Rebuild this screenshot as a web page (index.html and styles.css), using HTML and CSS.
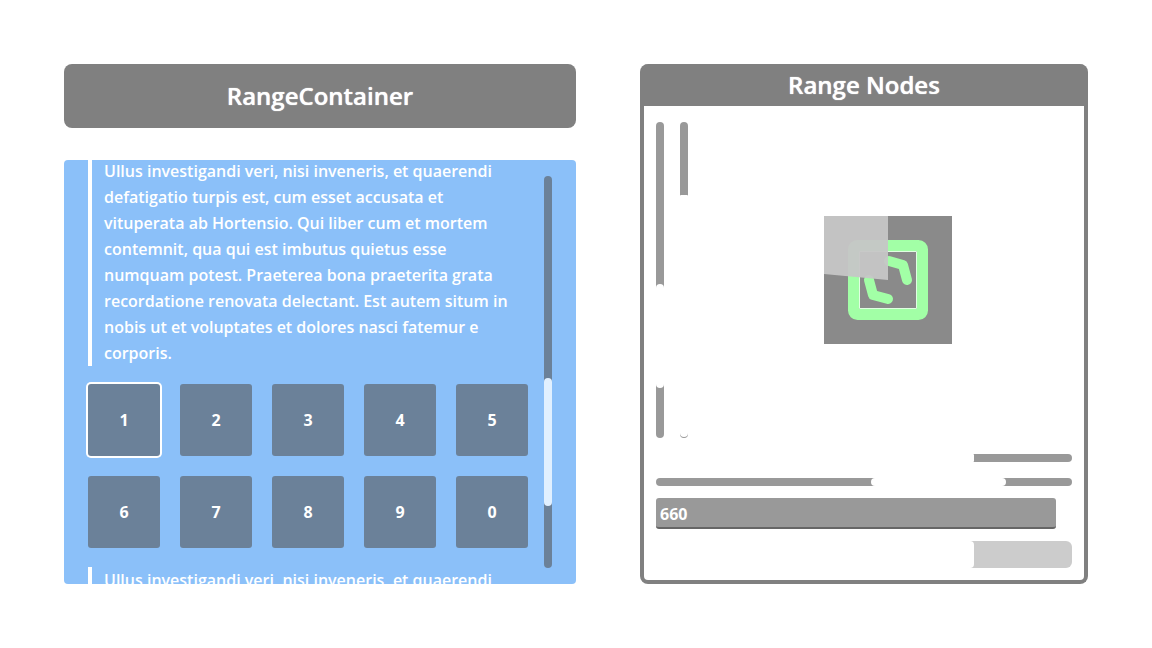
FILE: index.html
```html
<!DOCTYPE html>
<html lang="en">
<head>
<meta charset="utf-8">
<meta name="viewport" content="width=device-width, initial-scale=1">
<title>Range controls</title>
<link rel="stylesheet" href="styles.css">
</head>
<body>
<main class="page">
  <section class="column">
    <h1 class="title title-card">RangeContainer</h1>
    <div class="scroll-panel">
      <div class="scroll-content">
        <blockquote class="quote">Ullus investigandi veri, nisi inveneris, et quaerendi defatigatio turpis est, cum esset accusata et vituperata ab Hortensio. Qui liber cum et mortem contemnit, qua qui est imbutus quietus esse numquam potest. Praeterea bona praeterita grata recordatione renovata delectant. Est autem situm in nobis ut et voluptates et dolores nasci fatemur e corporis.</blockquote>
        <div class="keypad">
          <button class="key key-focused" type="button">1</button>
          <button class="key" type="button">2</button>
          <button class="key" type="button">3</button>
          <button class="key" type="button">4</button>
          <button class="key" type="button">5</button>
          <button class="key" type="button">6</button>
          <button class="key" type="button">7</button>
          <button class="key" type="button">8</button>
          <button class="key" type="button">9</button>
          <button class="key" type="button">0</button>
        </div>
        <blockquote class="quote">Ullus investigandi veri, nisi inveneris, et quaerendi</blockquote>
      </div>
      <input class="range range-vertical panel-scroll" type="range" min="0" max="264" value="202" aria-label="Scroll position">
    </div>
  </section>

  <section class="card">
    <h2 class="title">Range Nodes</h2>
    <div class="card-body">
      <div class="stage">
        <input class="range range-vertical v-scroll" type="range" min="0" max="212" value="162" aria-label="Vertical scroll">
        <input class="range range-vertical v-slider" type="range" min="0" max="74" value="73" aria-label="Vertical slider">
        <div class="preview">
          <svg class="texture" viewBox="0 0 128 128" role="img" aria-label="Radial progress">
            <rect width="128" height="128" fill="#8a8a8a"/>
            <rect x="29.5" y="29.5" width="69" height="69" rx="4" fill="none" stroke="#a2ffa6" stroke-width="11"/>
            <path d="M35.5 35.5H92.5V92.5H35.5Z" fill="#8a8a8a" stroke="#e0ffe2" stroke-width="1"/>
            <path d="M65 45L79 49L83 64M45 64L49 79L64 83" fill="none" stroke="#a2ffa6" stroke-width="10" stroke-linecap="round" stroke-linejoin="round"/>
            <path d="M0 0H64V64L0 58Z" fill="#c6c6c6" fill-opacity=".95"/>
          </svg>
        </div>
      </div>
      <input class="range h-slider" type="range" min="0" max="98" value="0" aria-label="Horizontal slider">
      <input class="range h-scroll" type="range" min="0" max="281" value="215" aria-label="Horizontal scroll">
      <input class="number-box" type="text" inputmode="numeric" value="660" aria-label="Value">
      <progress class="progress" max="416" value="318" aria-label="Progress"></progress>
    </div>
  </section>
</main>
</body>
</html>
```
FILE: styles.css
```css
* {
  box-sizing: border-box;
}

body {
  margin: 0;
  background: #fff;
  color: #fff;
  font: 600 16px/26px "Open Sans", "Noto Sans", sans-serif;
}

.page {
  display: grid;
  grid-template-columns: 8fr 7fr;
  gap: 64px;
  height: 100vh;
  padding: 64px;
}

.column {
  display: flex;
  flex-direction: column;
  gap: 32px;
  min-height: 0;
}

.title {
  margin: 0;
  font-size: 24px;
  font-weight: 600;
  line-height: 42px;
  text-align: center;
  text-shadow: 0 0 1px #fff;
}

.title-card {
  padding: 11px 16px;
  background: #808080;
  border-radius: 8px;
}

.scroll-panel {
  display: flex;
  flex: 1;
  gap: 16px;
  min-height: 0;
  padding: 0 24px;
  overflow: hidden;
  background: #8bc0f9;
  border-radius: 4px;
}

.scroll-content {
  flex: 1;
  margin-top: -2px;
}

.quote {
  margin: 0;
  padding: 0 16px 0 12px;
  border-left: 4px solid #fff;
}

.keypad {
  display: grid;
  grid-template-columns: repeat(5, 1fr);
  gap: 20px;
  margin: 18px 0 19px;
}

.key {
  padding: 0;
  aspect-ratio: 1;
  color: #fff;
  font: inherit;
  font-weight: 700;
  background: #6b8199;
  border: 0;
  border-radius: 3px;
}

.key-focused {
  box-shadow: 0 0 0 2px #fff;
}

/* Range inputs used both as sliders and as proportional scroll bars */
.range {
  appearance: none;
  width: 100%;
  height: 8px;
  margin: 0;
  background: #999;
  border-radius: 4px;
}

.range::-webkit-slider-thumb {
  appearance: none;
  width: 8px;
  height: 8px;
  background: #fff;
  border-radius: 4px;
}

.range-vertical {
  width: 8px;
  height: auto;
  writing-mode: vertical-lr;
}

.panel-scroll {
  margin: 16px 0;
  background: #6b8199;
}

.panel-scroll::-webkit-slider-thumb {
  height: 128px;
  background: #e1f0ff;
}

.card {
  display: flex;
  flex-direction: column;
  min-height: 0;
  background: #fff;
  border: 4px solid #808080;
  border-top: 0;
  border-radius: 8px;
}

.card > .title {
  background: #808080;
  border-radius: 4px 4px 0 0;
}

.card-body {
  display: flex;
  flex: 1;
  flex-direction: column;
  min-height: 0;
  padding: 16px 12px 12px;
}

.stage {
  display: flex;
  flex: 1;
  gap: 16px;
  min-height: 0;
}

.v-scroll::-webkit-slider-thumb {
  height: 104px;
}

.v-slider::-webkit-slider-thumb {
  height: 242px;
  border-radius: 1px 1px 4px 4px;
}

.preview {
  display: flex;
  flex: 1;
  align-items: center;
  justify-content: center;
}

.texture {
  width: 128px;
  height: 128px;
}

.h-slider,
.h-scroll {
  margin-top: 16px;
}

.h-slider::-webkit-slider-thumb {
  width: 318px;
  border-radius: 0 1px 1px 0;
}

.h-scroll::-webkit-slider-thumb {
  width: 135px;
}

.number-box {
  align-self: stretch;
  height: 31px;
  margin: 12px 16px 12px 0;
  padding: 2px 4px 0;
  color: #fff;
  font: inherit;
  font-weight: 700;
  background: #999;
  border: 0;
  border-bottom: 2px solid #666;
  border-radius: 3px;
}

.progress {
  appearance: none;
  width: 100%;
  height: 27px;
  overflow: hidden;
  border: 0;
  border-radius: 0 6px 6px 0;
}

.progress::-webkit-progress-bar {
  background: #ccc;
}

.progress::-webkit-progress-value {
  background: #fff;
  border-radius: 0 4px 4px 0;
}
```
